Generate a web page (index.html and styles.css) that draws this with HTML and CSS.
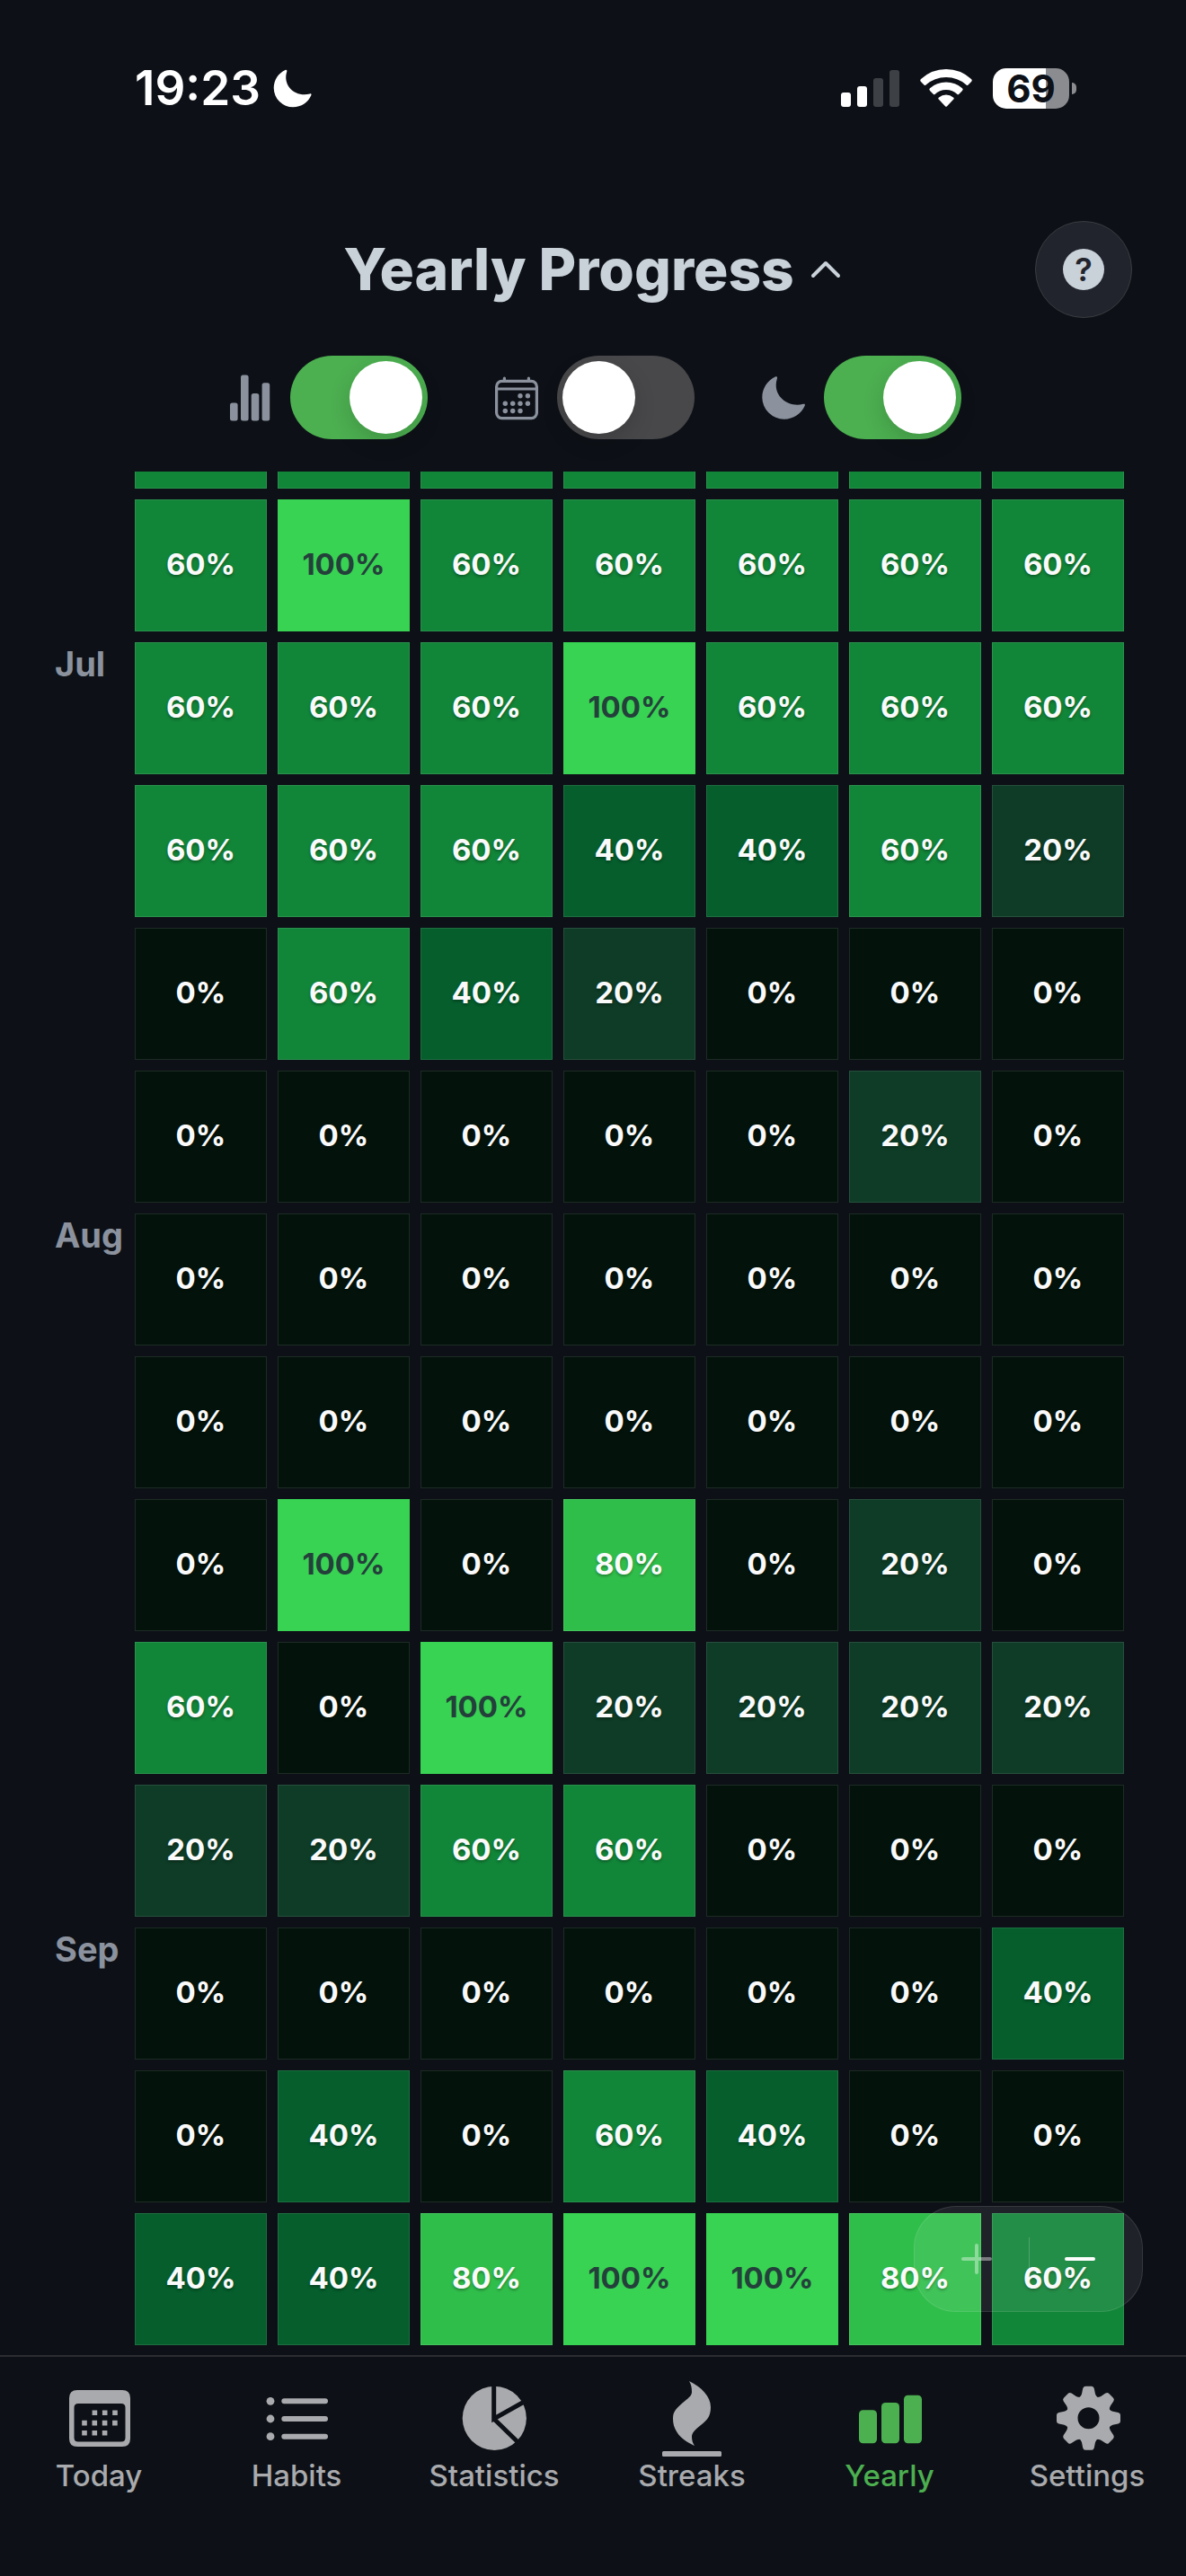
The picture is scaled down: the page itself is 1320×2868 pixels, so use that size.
FILE: index.html
```html
<!DOCTYPE html>
<html lang="en">
<head>
    <meta charset="UTF-8">
    <meta name="viewport" content="width=device-width, initial-scale=1.0">
    <title>Yearly Progress</title>
    <link rel="stylesheet" href="styles.css">
</head>
<body>
    <svg class="sprite" aria-hidden="true">
        <symbol id="moon" viewBox="0 3 48 49">
            <path d="M14.8 4C6 8 .3 17 .3 27A24.4 24.4 0 0 0 24.7 51.2C35 51.2 44 45 47.8 36C48.3 34.6 47.5 33.8 46 34.3C28 39 11 24 16.9 6C17.4 4.2 16.3 3.3 14.8 4Z"/>
        </symbol>
    </svg>

    <div class="status-bar">
        <div class="status-left">
            <span class="time">19:23</span>
            <svg class="status-moon"><use href="#moon"/></svg>
        </div>
        <div class="status-right">
            <svg width="65" height="41" viewBox="0 0 65 41">
                <rect x="0" y="25" width="11" height="16" rx="3"/>
                <rect x="18" y="18" width="11" height="23" rx="3"/>
                <rect class="dim" x="36" y="9" width="11" height="32" rx="3"/>
                <rect class="dim" x="54" y="0" width="11" height="41" rx="3"/>
            </svg>
            <svg width="58" height="42" viewBox="0 0 58 42">
                <path d="M1 14Q-.5 12.5 1 11Q13 0 29 0T57 11Q58.500 12.500 57 14L53.500 17.500Q52.500 18.500 51.500 17.500Q42 9 29 9T6.500 17.500Q5.500 18.500 4.500 17.500Z"/>
                <path d="M11 24Q9.500 22.500 11 21.200Q18.500 14.500 29 14.500T47 21.200Q48.500 22.500 47 24L43.300 27.700Q42.300 28.700 41.200 27.700Q36.500 23 29 23T16.800 27.700Q15.700 28.700 14.700 27.700Z"/>
                <path d="M20.700 33.500Q19.700 32.300 21 31.400Q24.500 28.500 29 28.500T37 31.400Q38.300 32.300 37.300 33.500L30 41.300Q29 42.300 28 41.300Z"/>
            </svg>
            <div class="battery"><span class="battery-level">69</span></div>
        </div>
    </div>

    <header class="header">
        <h1 class="title">
            <button class="title-button">Yearly Progress
                <svg width="38" height="24" viewBox="0 0 38 24"><path d="M5 19L19 5L33 19" fill="none" stroke="currentColor" stroke-width="4" stroke-linecap="round" stroke-linejoin="round"/></svg>
            </button>
        </h1>
        <button class="help" aria-label="Help"><span class="help-mark">?</span></button>
    </header>

    <div class="toggles">
        <label class="toggle">
            <svg class="toggle-icon" viewBox="0 0 48 54">
                <rect x="2" y="32.500" width="8.600" height="20" rx="2.500"/>
                <rect x="14" y="1.500" width="8.600" height="51" rx="2.500"/>
                <rect x="25.700" y="22" width="8.600" height="30.500" rx="2.500"/>
                <rect x="37.600" y="10.200" width="8.600" height="42.300" rx="2.500"/>
            </svg>
            <input type="checkbox" class="switch" aria-label="Show percentages" checked>
        </label>
        <label class="toggle">
            <svg class="toggle-icon" viewBox="0 0 48 54">
                <g fill="none" stroke="currentColor" stroke-width="3.200">
                    <rect x="1.600" y="8.400" width="44.800" height="41.200" rx="6"/>
                    <path d="M1.600 17H46.400"/>
                    <path d="M10.400 8V5M37.400 8V5" stroke-linecap="round"/>
                </g>
                <g>
                    <circle cx="28" cy="24.800" r="2.700"/><circle cx="36.400" cy="24.800" r="2.700"/>
                    <circle cx="11.300" cy="33.200" r="2.700"/><circle cx="19.700" cy="33.200" r="2.700"/><circle cx="28" cy="33.200" r="2.700"/><circle cx="36.400" cy="33.200" r="2.700"/>
                    <circle cx="11.300" cy="41.500" r="2.700"/><circle cx="19.700" cy="41.500" r="2.700"/><circle cx="28" cy="41.500" r="2.700"/>
                </g>
            </svg>
            <input type="checkbox" class="switch" aria-label="Show dates">
        </label>
        <label class="toggle">
            <svg class="toggle-icon"><use href="#moon"/></svg>
            <input type="checkbox" class="switch" aria-label="Dark mode" checked>
        </label>
    </div>

    <main class="main">
        <div class="scroller">
            <table class="year">
                <tbody id="weeks"></tbody>
            </table>
        </div>
        <div class="zoom">
            <button class="zoom-button" aria-label="Zoom in" disabled>
                <svg width="38" height="38" viewBox="0 0 38 38"><path d="M19 4V34M4 19H34"/></svg>
            </button>
            <button class="zoom-button" aria-label="Zoom out">
                <svg width="38" height="38" viewBox="0 0 38 38"><path d="M4 19H34"/></svg>
            </button>
        </div>
    </main>

    <nav class="tab-bar">
        <a href="#today" class="tab">
            <svg class="tab-icon" viewBox="0 0 84 84">
                <path fill-rule="evenodd" d="M18 10H68Q77 10 77 19V64Q77 73 68 73H18Q9 73 9 64V19Q9 10 18 10ZM19 25Q14.500 25 14.500 29.500V63Q14.500 67.500 19 67.500H67Q71.500 67.500 71.500 63V29.500Q71.500 25 67 25Z"/>
                <path fill="none" stroke="currentColor" stroke-width="5.600" stroke-dasharray="5.600 5.700" d="M34.600 35.300H63M23.200 46.600H63M23.200 57.700H52"/>
            </svg>
            <span>Today</span>
        </a>
        <a href="#habits" class="tab">
            <svg class="tab-icon" viewBox="0 0 84 84">
                <circle cx="13" cy="22.300" r="4.400"/><circle cx="13" cy="42" r="4.400"/><circle cx="13" cy="61.700" r="4.400"/>
                <path fill="none" stroke="currentColor" stroke-width="6" stroke-linecap="round" d="M28.300 22.300H74M28.300 42H74M28.300 61.700H74"/>
            </svg>
            <span>Habits</span>
        </a>
        <a href="#statistics" class="tab">
            <svg class="tab-icon" viewBox="0 0 84 84">
                <circle cx="42.300" cy="41.300" r="35.600"/>
                <path class="cut" d="M41.700 2V42L78 21.500M41.700 42L70 69.500"/>
            </svg>
            <span>Statistics</span>
        </a>
        <a href="#streaks" class="tab">
            <svg class="tab-icon" viewBox="0 0 84 84">
                <path d="M39 0C53 7 63 17 63 29C63 38 60 43 52 49C45 54.500 42 58 42 62C42 66 43 69 45 72C31 66 21 56 21 42C21 34 24 31 32 24C39 18.500 42 16 42 12C42 7 41 3 39 0Z"/>
                <rect x="9" y="78" width="66" height="6" rx="1.500"/>
            </svg>
            <span>Streaks</span>
        </a>
        <a href="#yearly" class="tab active" aria-current="page">
            <svg class="tab-icon" viewBox="0 0 84 84">
                <rect x="8" y="32.300" width="20" height="37" rx="4.500"/>
                <rect x="33" y="24" width="20" height="45.300" rx="4.500"/>
                <rect x="58" y="15.700" width="20" height="53.600" rx="4.500"/>
            </svg>
            <span>Yearly</span>
        </a>
        <a href="#settings" class="tab">
            <svg class="tab-icon" viewBox="0 0 84 84">
                <g transform="translate(43.500 41.300)">
                    <circle r="18.700" fill="none" stroke="currentColor" stroke-width="13.400"/>
                    <g id="teeth">
                        <path id="tooth" d="M-10 -23Q-8 -25 -7.500 -27L-6.300 -33Q-5.700 -35.500 -3.500 -35.500H3.500Q5.700 -35.500 6.300 -33L7.500 -27Q8 -25 10 -23Z"/>
                        <use href="#tooth" transform="rotate(90)"/>
                        <use href="#tooth" transform="rotate(180)"/>
                        <use href="#tooth" transform="rotate(270)"/>
                    </g>
                    <use href="#teeth" transform="rotate(45)"/>
                </g>
            </svg>
            <span>Settings</span>
        </a>
    </nav>

    <script>
        // the first week is mostly scrolled away, so it gets no labels
        const weeks = [
            { scrolled: true, days: [60, 60, 60, 60, 60, 60, 60] },
            { days: [60, 100, 60, 60, 60, 60, 60] },
            { month: "Jul", days: [60, 60, 60, 100, 60, 60, 60] },
            { days: [60, 60, 60, 40, 40, 60, 20] },
            { days: [0, 60, 40, 20, 0, 0, 0] },
            { days: [0, 0, 0, 0, 0, 20, 0] },
            { month: "Aug", days: [0, 0, 0, 0, 0, 0, 0] },
            { days: [0, 0, 0, 0, 0, 0, 0] },
            { days: [0, 100, 0, 80, 0, 20, 0] },
            { days: [60, 0, 100, 20, 20, 20, 20] },
            { days: [20, 20, 60, 60, 0, 0, 0] },
            { month: "Sep", days: [0, 0, 0, 0, 0, 0, 40] },
            { days: [0, 40, 0, 60, 40, 0, 0] },
            { days: [40, 40, 80, 100, 100, 80, 60] }
        ];

        const body = document.getElementById("weeks");
        weeks.forEach(week => {
            const row = document.createElement("tr");
            row.innerHTML = `<th class="month" scope="row">${week.month || ""}</th>` +
                week.days.map(day => `<td class="day level-${day}">${week.scrolled ? "" : day + "%"}</td>`).join("");
            body.appendChild(row);
        });
    </script>
</body>
</html>
```

FILE: styles.css
```css
* { box-sizing: border-box; }
body {
    margin: 0;
    height: 100vh;
    display: flex;
    flex-direction: column;
    overflow: hidden;
    background-color: #0d1117;
    color: #c9d1d9;
    font-family: Inter, "Liberation Sans", sans-serif;
}
button { border: none; background: none; padding: 0; margin: 0; font: inherit; color: inherit; cursor: pointer; }
svg { display: block; fill: currentColor; }
.sprite { position: absolute; width: 0; height: 0; }

/* status bar */
.status-bar { display: flex; justify-content: space-between; align-items: center; height: 96px; margin: 50px 122px 100px 150px; color: white; }
.status-left { display: flex; align-items: center; gap: 14px; }
.time { font-size: 53px; line-height: 60px; font-weight: 600; }
.status-moon { width: 43px; height: 43px; }
.status-right { display: flex; align-items: center; gap: 23px; }
.dim { opacity: 0.2; }
.battery {
    position: relative;
    width: 85px;
    height: 45px;
    border-radius: 15px;
    background: linear-gradient(to right, white 69%, #8b8c90 69%);
    color: #0d1117;
    text-align: center;
    margin-right: 8px;
}
.battery::after {
    content: '';
    position: absolute;
    left: 88px;
    top: 16px;
    width: 5px;
    height: 13px;
    border-radius: 0 6px 6px 0;
    background: #8b8c90;
}
.battery-level { font-size: 42px; line-height: 45px; font-weight: 700; }

/* header */
.header { display: grid; grid-template-columns: 1fr auto 1fr; align-items: center; padding: 0 60px; }
.title { grid-column: 2; margin: 0; font-size: 64px; line-height: 108px; font-weight: 800; }
.title-button { display: flex; align-items: center; gap: 16px; }
.help {
    justify-self: end;
    display: flex;
    align-items: center;
    justify-content: center;
    width: 108px;
    height: 108px;
    border: 1px solid #3a3c40;
    border-radius: 50%;
    background: #21242c;
}
.help-mark { width: 46px; height: 46px; border-radius: 50%; background: #c9d1d9; color: #21242c; font-size: 36px; line-height: 46px; font-weight: 600; }

/* display toggles */
.toggles { display: flex; justify-content: center; gap: 75px; padding: 42px 0 36px 4px; }
.toggle { display: flex; align-items: center; gap: 21px; color: #8b929e; }
.toggle-icon { width: 48px; height: 54px; }
.switch {
    appearance: none;
    width: 153px;
    height: 93px;
    margin: 0;
    padding: 6px;
    border-radius: 47px;
    background: #48484a;
    cursor: pointer;
}
.switch::before {
    content: '';
    display: block;
    width: 81px;
    height: 81px;
    border-radius: 50%;
    background: white;
    box-shadow: 0 9px 24px rgba(0, 0, 0, 0.15);
}
.switch:checked { background: #4caf50; }
.switch:checked::before { margin-left: auto; }

/* year grid */
.main { position: relative; flex: 1; min-height: 0; }
.scroller { display: flex; flex-direction: column; justify-content: flex-end; height: 100%; overflow: hidden; padding: 0 57px 0 49px; }
.year { width: 100%; table-layout: fixed; border-collapse: separate; border-spacing: 12px; margin-bottom: -1px; }
.month { width: 77px; padding: 0; vertical-align: top; text-align: left; font-size: 38px; line-height: 48px; font-weight: 700; color: #8b929e; }
.day {
    height: 147px;
    padding: 0 0 3px;
    border: 1px solid rgba(255, 255, 255, 0.1);
    text-align: center;
    font-size: 33px;
    line-height: 40px;
    font-weight: 700;
    color: #fafafa;
    text-shadow: 0 2px 3px rgba(0, 0, 0, 0.3);
}
.level-0 { background: #03130b; }
.level-20 { background: #0e3c26; }
.level-40 { background: #055e2c; }
.level-60 { background: #118538; }
.level-80 { background: #30be4b; }
.level-100 { background: #39d353; border-color: transparent; color: #24403b; text-shadow: none; }

/* zoom buttons float over the grid */
.zoom {
    position: absolute;
    right: 48px;
    bottom: 48px;
    display: flex;
    width: 255px;
    height: 118px;
    padding: 0 12px;
    border: 1px solid rgba(255, 255, 255, 0.1);
    border-radius: 47px;
    background: rgba(255, 255, 255, 0.08);
}
.zoom::after { content: ''; position: absolute; left: 50%; top: 34px; width: 1px; height: 48px; background: rgba(255, 255, 255, 0.2); }
.zoom-button { flex: 1; display: flex; align-items: center; justify-content: center; color: white; }
.zoom-button svg { fill: none; stroke: currentColor; stroke-width: 4; stroke-linecap: round; }
.zoom-button:disabled { opacity: 0.4; }

/* bottom tabs */
.tab-bar { display: flex; padding: 27px 0 91px; border-top: 2px solid #2a2c31; }
.tab { flex: 1; display: flex; flex-direction: column; align-items: center; color: #a9aaad; font-size: 33px; line-height: 42px; font-weight: 500; text-decoration: none; }
.tab.active { color: #4caf50; }
.tab-icon { width: 84px; height: 84px; }
.cut { fill: none; stroke: #0d1117; stroke-width: 5; }
```
